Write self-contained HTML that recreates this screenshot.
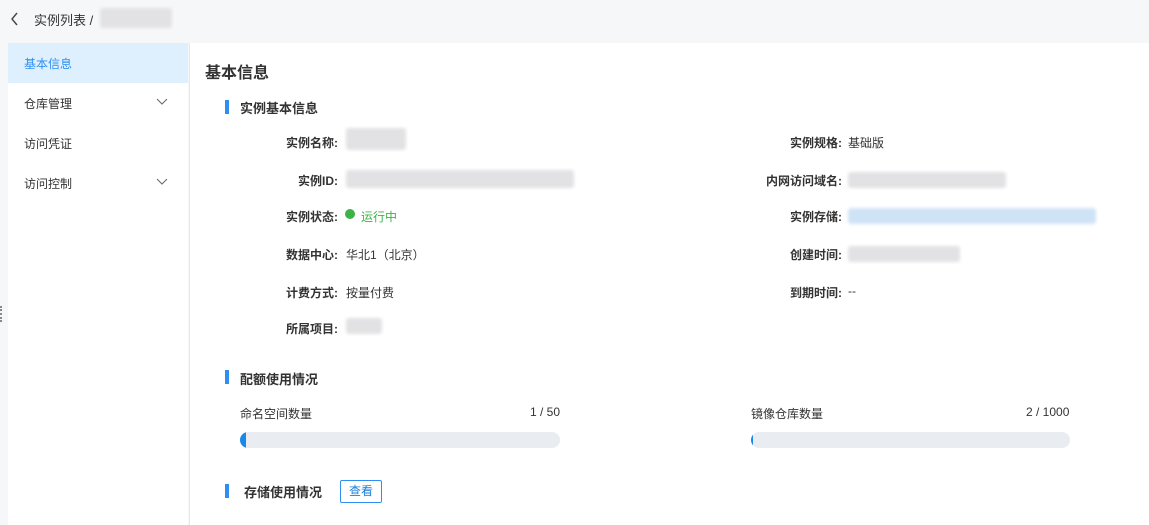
<!DOCTYPE html>
<html><head><meta charset="utf-8"><style>
*{margin:0;padding:0;box-sizing:border-box}
body{width:1149px;height:525px;background:#f6f7f9;font-family:"Liberation Sans","Noto Sans CJK SC",sans-serif;position:relative;overflow:hidden;color:#333;font-size:12px}
.a{position:absolute}
.blur{position:absolute;background:#e2e2e4;border-radius:3px;filter:blur(1.5px)}
.lbl{position:absolute;font-weight:bold;text-align:right;font-size:12px;color:#333}
.val{position:absolute;font-size:12px;color:#333}
.bar{position:absolute;width:4px;height:14px;background:#2f8ff0}
.h{position:absolute;font-weight:bold;font-size:13px;color:#333}
</style></head><body>
<svg class="a" style="left:10px;top:12px" width="10" height="14"><path d="M7 1 L2 7 L7 13" fill="none" stroke="#444" stroke-width="1.4"/></svg>
<div class="a" style="left:34px;top:10px;font-size:13px;color:#333">实例列表 /</div>
<div class="blur" style="left:100px;top:8px;width:72px;height:20px"></div>
<div class="a" style="left:8px;top:43px;width:180px;height:482px;background:#fff"></div>
<div class="a" style="left:8px;top:43px;width:180px;height:40px;background:#def0fd"></div>
<div class="a" style="left:24px;top:55px;color:#2f8ff0">基本信息</div>
<div class="a" style="left:24px;top:95px">仓库管理</div>
<div class="a" style="left:24px;top:135px">访问凭证</div>
<div class="a" style="left:24px;top:175px">访问控制</div>
<svg class="a" style="left:156px;top:98px" width="12" height="8"><path d="M1 1 L6 6 L11 1" fill="none" stroke="#666" stroke-width="1"/></svg>
<svg class="a" style="left:156px;top:178px" width="12" height="8"><path d="M1 1 L6 6 L11 1" fill="none" stroke="#666" stroke-width="1"/></svg>
<div class="a" style="left:189px;top:43px;width:960px;height:482px;background:#fff;border-left:1px solid #e8e8e8"></div>
<div class="a" style="left:205px;top:59px;font-size:16px;font-weight:bold;color:#333">基本信息</div>
<div class="bar" style="left:225px;top:100px"></div><div class="h" style="left:240px;top:98px">实例基本信息</div>
<div class="lbl" style="right:811px;top:134px">实例名称:</div><div class="blur" style="left:346px;top:128px;width:60px;height:22px"></div>
<div class="lbl" style="right:811px;top:172px">实例ID:</div><div class="blur" style="left:346px;top:170px;width:228px;height:18px"></div>
<div class="lbl" style="right:811px;top:208px">实例状态:</div>
<div class="a" style="left:345px;top:209px;width:10px;height:10px;border-radius:50%;background:#3bb346"></div>
<div class="val" style="left:361px;top:208px;color:#3bb346">运行中</div>
<div class="lbl" style="right:811px;top:246px">数据中心:</div><div class="val" style="left:346px;top:246px">华北1（北京）</div>
<div class="lbl" style="right:811px;top:284px">计费方式:</div><div class="val" style="left:346px;top:284px">按量付费</div>
<div class="lbl" style="right:811px;top:320px">所属项目:</div><div class="blur" style="left:346px;top:318px;width:36px;height:16px"></div>
<div class="lbl" style="right:307px;top:134px">实例规格:</div><div class="val" style="left:848px;top:134px">基础版</div>
<div class="lbl" style="right:307px;top:172px">内网访问域名:</div><div class="blur" style="left:848px;top:172px;width:158px;height:16px"></div>
<div class="lbl" style="right:307px;top:208px">实例存储:</div><div class="blur" style="left:848px;top:208px;width:248px;height:16px;background:#cfe3f6"></div>
<div class="lbl" style="right:307px;top:246px">创建时间:</div><div class="blur" style="left:848px;top:246px;width:112px;height:16px"></div>
<div class="lbl" style="right:307px;top:284px">到期时间:</div><div class="val" style="left:848px;top:284px">--</div>
<div class="bar" style="left:225px;top:370px"></div><div class="h" style="left:240px;top:369px">配额使用情况</div>
<div class="val" style="left:240px;top:405px">命名空间数量</div><div class="val" style="left:530px;top:405px">1 / 50</div>
<div class="a" style="left:240px;top:432px;width:320px;height:16px;border-radius:8px;background:#e9ecf1;overflow:hidden"><div style="width:6px;height:16px;background:#1a88e8;border-radius:8px 0 0 8px"></div></div>
<div class="val" style="left:751px;top:405px">镜像仓库数量</div><div class="val" style="left:1026px;top:405px">2 / 1000</div>
<div class="a" style="left:751px;top:432px;width:319px;height:16px;border-radius:8px;background:#e9ecf1;overflow:hidden"><div style="width:2px;height:16px;background:#1a88e8"></div></div>
<div class="bar" style="left:225px;top:484px"></div><div class="h" style="left:244px;top:482px">存储使用情况</div>
<div class="a" style="left:340px;top:480px;width:42px;height:23px;border:1px solid #2f8ff0;border-radius:2px;color:#1a7fd8;text-align:center;line-height:21px">查看</div>
<div class="a" style="left:0;top:306px;width:4px;height:16px;border-left:2px dotted #888"></div>
</body></html>
